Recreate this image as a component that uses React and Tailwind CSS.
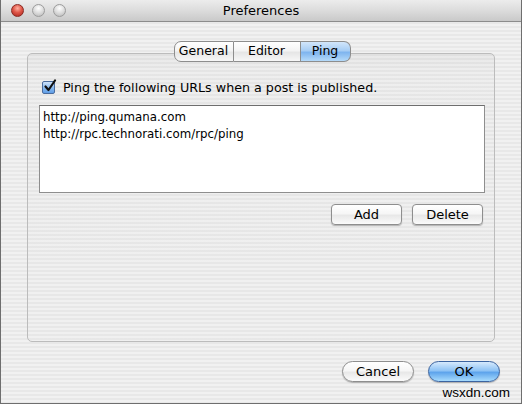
import React, { useState } from "react";

const stripes =
  "bg-[repeating-linear-gradient(to_bottom,#f1f1f1_0px,#f1f1f1_2px,#e8e8e8_2px,#e8e8e8_4px)]";

function Light({ color }) {
  const cls =
    color === "red"
      ? "bg-[radial-gradient(circle_at_50%_30%,#ffb0a0_0%,#e0584a_45%,#a8231c_100%)] border-[#8a2a22]"
      : "bg-[radial-gradient(circle_at_50%_30%,#ffffff_0%,#dcdcdc_50%,#b4b4b4_100%)] border-[#9c9c9c]";
  return <div className={`w-[13px] h-[13px] rounded-full border ${cls}`} />;
}

function Tab({ label, active, first, last, onClick }) {
  return (
    <button
      onClick={onClick}
      className={`h-[21px] flex items-center justify-center text-[12.5px] text-black border-y border-[#8d8d8d] ${
        first ? "rounded-l-[7px] border-l w-[60px]" : ""
      } ${last ? "rounded-r-[7px] border-r w-[50px]" : "border-r"} ${
        !first && !last ? "w-[67px]" : ""
      } ${
        active
          ? "bg-[linear-gradient(to_bottom,#d2e6fb_0%,#a7cdf4_45%,#7fb5ef_55%,#b5daf9_100%)]"
          : "bg-[linear-gradient(to_bottom,#ffffff_0%,#f4f4f4_45%,#e6e6e6_55%,#f7f7f7_100%)]"
      }`}
    >
      {label}
    </button>
  );
}

function AquaButton({ children, blue, pill, className = "" }) {
  return (
    <button
      className={`h-[21px] flex items-center justify-center text-[13px] text-black border shadow-[0_1px_1px_rgba(0,0,0,0.25)] ${
        pill ? "rounded-full" : "rounded-[4px]"
      } ${
        blue
          ? "border-[#3c64a0] bg-[linear-gradient(to_bottom,#d6eafd_0%,#8fc3f5_45%,#5ea4ec_55%,#a7dbfd_100%)]"
          : "border-[#8e8e8e] bg-[linear-gradient(to_bottom,#ffffff_0%,#f6f6f6_45%,#e8e8e8_55%,#fbfbfb_100%)]"
      } ${className}`}
    >
      {children}
    </button>
  );
}

function Checkbox({ checked, onChange }) {
  return (
    <button
      onClick={onChange}
      className="w-[13px] h-[13px] rounded-[2px] border border-[#4a6c9e] bg-[linear-gradient(to_bottom,#cfe3fa_0%,#8cbcf0_50%,#5f9de6_100%)] flex items-center justify-center relative"
    >
      {checked && (
        <svg width="14" height="14" viewBox="0 0 14 14" className="absolute -top-[3px] left-0">
          <path
            d="M2.5 7.5 L5.5 11 L12 1.5"
            fill="none"
            stroke="#111"
            strokeWidth="2.2"
            strokeLinecap="round"
            strokeLinejoin="round"
          />
        </svg>
      )}
    </button>
  );
}

export default function App() {
  const [tab, setTab] = useState("Ping");
  const [checked, setChecked] = useState(true);
  const urls = ["http://ping.qumana.com", "http://rpc.technorati.com/rpc/ping"];

  return (
    <div
      className={`relative w-[522px] h-[404px] flex flex-col border-x border-b border-[#6e6e6e] ${stripes}`}
      style={{ fontFamily: '"DejaVu Sans", "Liberation Sans", sans-serif' }}
    >
      {/* TITLE BAR */}
      <div className="h-[22px] shrink-0 grid grid-cols-[1fr_auto_1fr] items-center border-b border-[#8c8c8c] bg-[linear-gradient(to_bottom,#ececec_0%,#dcdcdc_50%,#c9c9c9_100%)]">
        <div className="flex items-center gap-[8px] pl-[10px]">
          <Light color="red" />
          <Light />
          <Light />
        </div>
        <div className="text-[13px] text-black">Preferences</div>
        <div />
      </div>

      {/* TABS */}
      <div className="relative z-10 mt-[19px] flex justify-center pl-[2px]">
        {["General", "Editor", "Ping"].map((t, i) => (
          <Tab
            key={t}
            label={t}
            active={tab === t}
            first={i === 0}
            last={i === 2}
            onClick={() => setTab(t)}
          />
        ))}
      </div>

      {/* GROUP BOX */}
      <div className="-mt-[9px] ml-[26px] mr-[26px] h-[289px] rounded-[5px] border border-[#bcbcbc] bg-[linear-gradient(to_bottom,rgba(0,0,0,0.035)_0px,rgba(0,0,0,0.01)_20px,rgba(0,0,0,0.005)_100%)] pt-[27px] pl-[11px] pr-[9px] flex flex-col">
        <label className="flex items-center gap-[8px] pl-[3px] h-[13px]">
          <Checkbox checked={checked} onChange={() => setChecked((p) => !p)} />
          <span className="text-[12.7px] text-black whitespace-nowrap">
            Ping the following URLs when a post is published.
          </span>
        </label>

        <div className="mt-[11px] h-[88px] bg-white border border-[#8e8e8e] border-t-[#6e6e6e] px-[3px] pt-[3px] flex flex-col">
          {urls.map((u) => (
            <div key={u} className="h-[17px] leading-[17px] text-[11.8px] text-black">
              {u}
            </div>
          ))}
        </div>

        <div className="mt-[11px] flex justify-end gap-[10px] pr-[2px]">
          <AquaButton className="w-[71px]">Add</AquaButton>
          <AquaButton className="w-[71px]">Delete</AquaButton>
        </div>
      </div>

      {/* FOOTER BUTTONS */}
      <div className="mt-[19px] flex justify-end gap-[14px] pr-[21px]">
        <AquaButton pill className="w-[72px]">Cancel</AquaButton>
        <AquaButton pill blue className="w-[72px]">OK</AquaButton>
      </div>

      {/* watermark */}
      <div
        className="absolute right-[11px] bottom-[4px] text-[13.5px] leading-none text-black"
        style={{ fontFamily: '"Liberation Sans", Arial, sans-serif' }}
      >
        wsxdn.com
      </div>
    </div>
  );
}
